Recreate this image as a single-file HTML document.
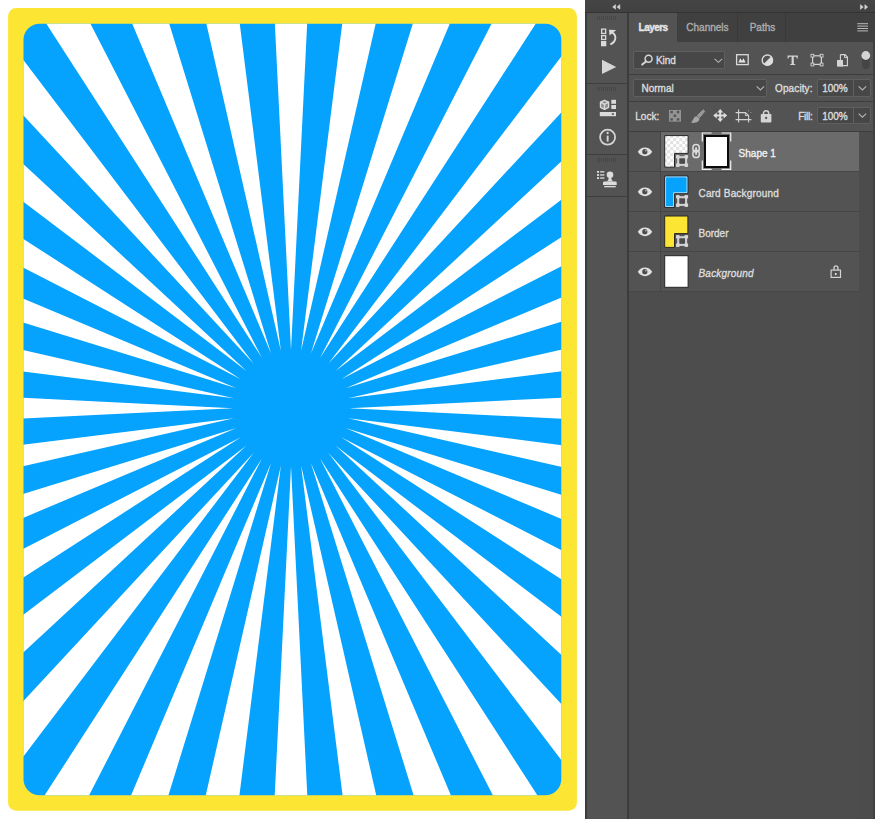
<!DOCTYPE html>
<html><head><meta charset="utf-8"><title>Layers</title>
<style>
html,body{margin:0;padding:0;}
body{width:875px;height:819px;position:relative;overflow:hidden;background:#fff;font-family:"Liberation Sans",sans-serif;font-size:10px;color:#dcdcdc;}
.abs{position:absolute;}
#card{position:absolute;left:0;top:0;}
#ui{position:absolute;left:585px;top:0;width:290px;height:819px;background:#4d4d4d;overflow:hidden;}
.t{position:absolute;white-space:nowrap;line-height:14px;height:14px;-webkit-text-stroke:0.35px currentColor;}
.hl{position:absolute;height:1px;background:#3e3e3e;}
.grip{position:absolute;width:20px;height:4px;background:repeating-linear-gradient(90deg,#474747 0,#474747 1px,#535353 1px,#535353 2px);}
.field{position:absolute;background:#474747;border:1px solid #5f5f5f;box-sizing:border-box;border-radius:2px;}
.row{position:absolute;left:44px;width:230px;height:39px;background:#535353;}
.row .eyecol{position:absolute;left:0;top:0;width:31px;height:39px;border-right:1px solid #464646;}
.thumb{position:absolute;left:79.2px;width:24.4px;height:32.5px;box-sizing:border-box;overflow:hidden;}
.chk{position:absolute;left:0;top:0;width:24px;height:32px;background:conic-gradient(#d9d9d9 25%,#fff 0 50%,#d9d9d9 0 75%,#fff 0) 0 0/8px 8px;opacity:.8}
.cut{position:absolute;width:16px;height:16px;background:#535353;border-left:1px solid #2a2a2a;border-top:1px solid #2a2a2a;}
</style></head><body>
<svg id="card" width="585" height="819" viewBox="0 0 585 819">
<defs><clipPath id="cc"><rect x="23.5" y="23.7" width="537.8" height="771.5" rx="16" ry="16"/></clipPath></defs>
<rect x="8.1" y="8.1" width="568.8" height="802.6" rx="8" ry="8" fill="#fde534"/>
<g clip-path="url(#cc)"><rect x="20" y="20" width="545" height="780" fill="#05a3fe"/><path d="M349.00 408.20L991.00 439.98L991.00 376.42ZM348.12 418.27L974.85 561.05L985.88 498.46ZM345.50 428.04L937.92 677.48L959.65 617.75ZM341.23 437.20L881.33 785.72L913.11 730.68ZM335.43 445.48L806.80 882.50L847.66 833.81ZM328.28 452.63L716.61 964.86L765.30 924.00ZM320.00 458.43L613.48 1030.31L668.52 998.53ZM310.84 462.70L500.55 1076.85L560.28 1055.12ZM301.07 465.32L381.26 1103.08L443.85 1092.05ZM291.00 466.20L259.22 1108.20L322.78 1108.20ZM280.93 465.32L138.15 1092.05L200.74 1103.08ZM271.16 462.70L21.72 1055.12L81.45 1076.85ZM262.00 458.43L-86.52 998.53L-31.48 1030.31ZM253.72 452.63L-183.30 924.00L-134.61 964.86ZM246.57 445.48L-265.66 833.81L-224.80 882.50ZM240.77 437.20L-331.11 730.68L-299.33 785.72ZM236.50 428.04L-377.65 617.75L-355.92 677.48ZM233.88 418.27L-403.88 498.46L-392.85 561.05ZM233.00 408.20L-409.00 376.42L-409.00 439.98ZM233.88 398.13L-392.85 255.35L-403.88 317.94ZM236.50 388.36L-355.92 138.92L-377.65 198.65ZM240.77 379.20L-299.33 30.68L-331.11 85.72ZM246.57 370.92L-224.80 -66.10L-265.66 -17.41ZM253.72 363.77L-134.61 -148.46L-183.30 -107.60ZM262.00 357.97L-31.48 -213.91L-86.52 -182.13ZM271.16 353.70L81.45 -260.45L21.72 -238.72ZM280.93 351.08L200.74 -286.68L138.15 -275.65ZM291.00 350.20L322.78 -291.80L259.22 -291.80ZM301.07 351.08L443.85 -275.65L381.26 -286.68ZM310.84 353.70L560.28 -238.72L500.55 -260.45ZM320.00 357.97L668.52 -182.13L613.48 -213.91ZM328.28 363.77L765.30 -107.60L716.61 -148.46ZM335.43 370.92L847.66 -17.41L806.80 -66.10ZM341.23 379.20L913.11 85.72L881.33 30.68ZM345.50 388.36L959.65 198.65L937.92 138.92ZM348.12 398.13L985.88 317.94L974.85 255.35Z" fill="#fff"/></g>
</svg>
<div class="abs" style="left:584.5px;top:0;width:2.5px;height:819px;background:#3c3c3c"></div>
<div id="ui">
<!-- all coordinates inside #ui are page-x minus 585 -->
<div class="abs" style="left:0;top:0;width:2px;height:819px;background:#3c3c3c"></div>
<!-- top bar -->
<div class="abs" style="left:0;top:0;width:290px;height:12px;background:linear-gradient(#454545,#414141)"></div>
<div class="abs" style="left:0;top:12px;width:290px;height:1px;background:#343434"></div>
<!-- icon strip -->
<div class="abs" style="left:2px;top:13px;width:40px;height:806px;background:#535353"></div>
<div class="abs" style="left:42px;top:13px;width:2px;height:806px;background:#3c3c3c"></div>
<div class="hl" style="left:1px;top:83px;width:41px"></div>
<div class="hl" style="left:1px;top:154px;width:41px"></div>
<div class="hl" style="left:1px;top:196px;width:41px"></div>
<div class="grip" style="left:12px;top:16px"></div>
<div class="grip" style="left:12px;top:87px"></div>
<div class="grip" style="left:12px;top:158px"></div>
<!-- layers panel -->
<div class="abs" style="left:44px;top:13px;width:245px;height:29px;background:#404040"></div>
<div class="abs" style="left:44px;top:13px;width:48px;height:29px;background:#535353"></div>
<div class="abs" style="left:44px;top:42px;width:245px;height:90px;background:#535353"></div>
<div class="abs" style="left:152px;top:14px;width:1px;height:28px;background:#393939"></div>
<div class="abs" style="left:200px;top:14px;width:1px;height:28px;background:#393939"></div>
<div class="hl" style="left:44px;top:74px;width:245px"></div>
<div class="hl" style="left:44px;top:101px;width:245px"></div>
<div class="hl" style="left:44px;top:131px;width:245px"></div>
<div class="abs" style="left:274px;top:132px;width:15px;height:687px;background:#4c4c4c"></div>
<div class="abs" style="left:288px;top:13px;width:2px;height:806px;background:#404040"></div>
<!-- tabs text -->
<div class="t" style="left:53.6px;top:21px;font-weight:bold;letter-spacing:-0.55px;color:#e6e6e6">Layers</div>
<div class="t" style="left:101.3px;top:21px;color:#adadad">Channels</div>
<div class="t" style="left:164.7px;top:21px;color:#adadad">Paths</div>
<!-- kind dropdown -->
<div class="field" style="left:48px;top:51.2px;width:92px;height:18.2px"></div>
<div class="t" style="left:70.9px;top:53.5px">Kind</div>
<!-- normal dropdown -->
<div class="field" style="left:48px;top:78.7px;width:134px;height:18px"></div>
<div class="t" style="left:56.5px;top:82px">Normal</div>
<div class="t" style="left:190px;top:82px;letter-spacing:0.12px">Opacity:</div>
<div class="field" style="left:232px;top:78.7px;width:37px;height:18px;border-radius:2px 0 0 2px"></div>
<div class="field" style="left:268px;top:78.7px;width:18px;height:18px;border-radius:0 2px 2px 0"></div>
<div class="t" style="left:237.2px;top:82px">100%</div>
<!-- lock row -->
<div class="t" style="left:50.3px;top:110px">Lock:</div>
<div class="t" style="left:213.2px;top:110px;letter-spacing:-0.25px">Fill:</div>
<div class="field" style="left:232px;top:106.6px;width:37px;height:17.8px;border-radius:2px 0 0 2px"></div>
<div class="field" style="left:268px;top:106.6px;width:18px;height:17.8px;border-radius:0 2px 2px 0"></div>
<div class="t" style="left:237.2px;top:110px">100%</div>
<!-- rows -->
<div class="row" style="top:132px;background:#6b6b6b"><div class="eyecol" style="background:#535353"></div></div>
<div class="row" style="top:172px"><div class="eyecol"></div></div>
<div class="row" style="top:212px"><div class="eyecol"></div></div>
<div class="row" style="top:252px"><div class="eyecol"></div></div>
<div class="hl" style="left:44px;top:171px;width:230px;background:#464646"></div>
<div class="hl" style="left:44px;top:211px;width:230px;background:#464646"></div>
<div class="hl" style="left:44px;top:251px;width:230px;background:#464646"></div>
<div class="hl" style="left:44px;top:291px;width:230px;background:#464646"></div>
<div class="t" style="left:153.6px;top:146.5px;color:#f0f0f0">Shape 1</div>
<div class="t" style="left:113.5px;top:186.5px;letter-spacing:0.17px">Card Background</div>
<div class="t" style="left:113.5px;top:226.5px">Border</div>
<div class="t" style="left:113.5px;top:266.5px;font-style:italic;letter-spacing:0.2px">Background</div>
<!-- mask -->
<div class="abs" style="left:118.8px;top:134.5px;width:25.2px;height:33.4px;background:#0a0a0a"></div>
<div class="abs" style="left:121px;top:136.9px;width:21.3px;height:28.9px;background:#fff"></div>
<svg class="abs" style="left:0;top:0" width="290" height="819" viewBox="585 0 290 819" fill="none">
<!-- collapse arrows -->
<path d="M612.600 6.900L615.600 4.600V9.200ZM616.900 6.900L619.900 4.600V9.200Z" fill="#d4d4d4" stroke="#d4d4d4" stroke-width="0.500"/>
<path d="M860.400 4.600L863.300 7L860.400 9.400Z M864.800 4.600L867.700 7L864.800 9.400Z" fill="#d4d4d4" stroke="#d4d4d4" stroke-width="0.500"/>
<!-- panel menu -->
<path d="M857.3 23.7H868M857.3 26.1H868M857.3 28.5H868M857.3 30.9H868" stroke="#b8b8b8" stroke-width="1"/>
<!-- history icon -->
<g stroke="#dadada" stroke-width="1.300">
<rect x="601.650" y="29.150" width="4" height="4.300"/>
<rect x="601.650" y="35.650" width="4" height="3.800"/>
<rect x="601.650" y="41.650" width="4" height="4" fill="#dadada"/>
</g>
<path d="M612 32.300C616.200 34.600 617.400 40.800 610.300 44.500" stroke="#dadada" stroke-width="1.900" fill="none"/>
<path d="M609 29.800L616.200 30.100L609.500 35.400Z" fill="#dadada"/>
<!-- play -->
<path d="M602 59.8L616.2 66.9L602 74Z" fill="#d6d6d6"/>
<!-- properties icon -->
<g stroke="#dadada" stroke-width="1.400" stroke-linejoin="round" fill="#8c8c8c">
<path d="M604.500 100.300L608.600 102.200V107.300L604.500 109.400L600.500 107.300V102.200Z"/>
<path d="M600.500 102.200L604.500 104.300L608.600 102.200M604.500 104.300V109.400" fill="none"/>
</g>
<rect x="611.300" y="99.800" width="4.700" height="4" fill="#dadada"/>
<rect x="611.300" y="105" width="4.700" height="4" fill="#dadada"/>
<rect x="599.800" y="112" width="16.200" height="4.200" fill="#dadada"/>
<rect x="611.800" y="113.100" width="2.100" height="1.900" fill="#666"/>
<!-- info -->
<circle cx="607.6" cy="137.2" r="7.5" stroke="#d4d4d4" stroke-width="1.8"/>
<rect x="606.7" y="135.6" width="1.9" height="6" fill="#d4d4d4"/>
<circle cx="607.65" cy="133" r="1.15" fill="#d4d4d4"/>
<!-- clone source -->
<g fill="#dcdcdc">
<rect x="597" y="171" width="2.100" height="1.800"/><rect x="600.100" y="171.200" width="4.300" height="1.300"/>
<rect x="597" y="174.100" width="2.100" height="1.800"/><rect x="600.100" y="174.300" width="4.300" height="1.300"/>
<rect x="597" y="177.200" width="2.100" height="1.800"/><rect x="600.100" y="177.400" width="4.300" height="1.300"/>
<circle cx="610" cy="174.800" r="3.300"/>
<path d="M608.700 177.200H611.300C611.300 179.600 611.800 181 614 181.600H606C608.200 181 608.700 179.600 608.700 177.200Z"/>
<path d="M604.200 181.400H615.500Q616.700 181.400 616.700 182.600V184.900H603V182.600Q603 181.400 604.200 181.400Z"/>
<rect x="604.200" y="185.900" width="11.500" height="1.400"/>
</g>
<!-- search icon -->
<circle cx="648.6" cy="58.700" r="3.500" stroke="#d6d6d6" stroke-width="1.500"/>
<path d="M646 61.400L642.200 64.600" stroke="#d6d6d6" stroke-width="2" stroke-linecap="round"/>
<!-- chevrons -->
<g stroke="#b4b4b4" stroke-width="1.15" fill="none">
<path d="M714.600 58.800L718.400 62.300L722.200 58.800"/>
<path d="M756.600 86.400L760.400 89.900L764.200 86.400"/>
<path d="M858.600 86.400L862.400 89.900L866.200 86.400"/>
<path d="M858.600 113.600L862.400 117.100L866.200 113.600"/>
</g>
<!-- filter: pixel -->
<rect x="736.600" y="54.700" width="11.600" height="9.900" stroke="#dadada" stroke-width="1.300"/>
<path d="M738.400 62.500L740.300 58.200L742 61L743.500 58.200L745.600 62.500Z" fill="#e4e4e4"/>
<!-- filter: adjustment -->
<circle cx="767.400" cy="60.200" r="5.200" stroke="#dadada" stroke-width="1.400"/>
<path d="M771.100 56.500A5.200 5.200 0 0 1 763.700 63.900Z" fill="#dedede"/>
<!-- filter: type -->
<path d="M787.6 55.4H797.8V58.4H796.8C796.6 57.2 796.2 56.8 795 56.8H793.8V63.2C793.8 63.9 794.2 64.1 795.2 64.1V65H790.2V64.1C791.2 64.1 791.6 63.9 791.6 63.2V56.8H790.4C789.2 56.8 788.8 57.2 788.6 58.4H787.6Z" fill="#d4d4d4"/>
<!-- filter: shape -->
<g stroke="#d4d4d4" stroke-width="1.2">
<rect x="812.6" y="55.8" width="8.8" height="8.6"/>
</g>
<g fill="#535353" stroke="#d4d4d4" stroke-width="0.9">
<rect x="811" y="54.3" width="2.8" height="2.8"/><rect x="820.2" y="54.3" width="2.8" height="2.8"/>
<rect x="811" y="63.1" width="2.8" height="2.8"/><rect x="820.2" y="63.1" width="2.8" height="2.8"/>
</g>
<!-- filter: smart object -->
<path d="M840.4 54.6H845L847.4 57V65.6H841" stroke="#d4d4d4" stroke-width="1.1"/>
<path d="M844.6 54.6V57.6H847.4" stroke="#d4d4d4" stroke-width="1"/>
<rect x="837" y="60" width="6" height="6.6" fill="#d4d4d4"/>
<path d="M840.4 54.6V60" stroke="#d4d4d4" stroke-width="1.1"/>
<!-- filter toggle -->
<rect x="862.300" y="52" width="7.400" height="17" rx="3.700" fill="#454545"/>
<circle cx="865.800" cy="55.500" r="4.400" fill="#d4d4d4"/>
<!-- lock: transparency -->
<rect x="669" y="110" width="12" height="11.600" fill="#949494"/>
<g fill="#555">
<rect x="670.400" y="110.900" width="2.500" height="2.400"/><rect x="676.800" y="110.900" width="2.500" height="2.400"/>
<rect x="673.600" y="114.500" width="2.500" height="2.500"/>
<rect x="670.400" y="118.200" width="2.500" height="2.400"/><rect x="676.800" y="118.200" width="2.500" height="2.400"/>
</g>
<!-- lock: brush -->
<path d="M703.200 109.800L704.800 111.300L699.400 117.700L697.200 115.600Z" fill="#989898" stroke="#989898" stroke-width="1" stroke-linejoin="round"/>
<path d="M696.800 116.200C693.400 116.200 693.800 119.800 691 122.600C695 123.600 699.800 122 699.400 118.600Z" fill="#a6a6a6"/>
<!-- lock: move -->
<path d="M720.200 109L723.200 112.600H721.200V114.600H723.600V112.600L727.200 115.500L723.600 118.400V116.400H721.200V118.400H723.200L720.200 122L717.200 118.400H719.200V116.400H716.800V118.400L713.200 115.500L716.800 112.600V114.600H719.200V112.600H717.200Z" fill="#dedede"/>
<!-- lock: artboard -->
<g stroke="#d4d4d4" stroke-width="1.1">
<path d="M738.6 109.6V122.6M735.6 112.6H745.4L748.6 115.6V122.6M735.6 119.6H751.4"/>
<path d="M745.4 112.6V115.6H748.6" stroke-width="0.9"/>
<path d="M748 110.400L749 111.200M750.400 113L751.200 112.200" stroke-width="0.9" stroke-opacity="0.7"/>
</g>
<!-- lock: all -->
<path d="M763.5 114.4V113.400A2.6 2.6 0 0 1 768.700 113.400V114.400" stroke="#d4d4d4" stroke-width="1.5"/>
<rect x="760.8" y="113.9" width="10.6" height="8.6" rx="0.8" fill="#d4d4d4"/>
<circle cx="766.100" cy="118" r="1.150" fill="#535353"/>
<!-- eyes -->
<g>
<path d="M637.800 151.800C641 146 649 146 652.200 151.800C649 157.600 641 157.600 637.800 151.800Z" fill="#e0e0e0"/>
<circle cx="644.800" cy="151.700" r="2.600" fill="#4a4a4a"/>
<circle cx="645.800" cy="150.800" r="0.800" fill="#c8c8c8"/>
</g>
<g transform="translate(0,40)">
<path d="M637.800 151.800C641 146 649 146 652.200 151.800C649 157.600 641 157.600 637.800 151.800Z" fill="#e0e0e0"/>
<circle cx="644.800" cy="151.700" r="2.600" fill="#4a4a4a"/>
<circle cx="645.800" cy="150.800" r="0.800" fill="#c8c8c8"/>
</g><g transform="translate(0,80)">
<path d="M637.800 151.800C641 146 649 146 652.200 151.800C649 157.600 641 157.600 637.800 151.800Z" fill="#e0e0e0"/>
<circle cx="644.800" cy="151.700" r="2.600" fill="#4a4a4a"/>
<circle cx="645.800" cy="150.800" r="0.800" fill="#c8c8c8"/>
</g><g transform="translate(0,120)">
<path d="M637.800 151.800C641 146 649 146 652.200 151.800C649 157.600 641 157.600 637.800 151.800Z" fill="#e0e0e0"/>
<circle cx="644.800" cy="151.700" r="2.600" fill="#4a4a4a"/>
<circle cx="645.800" cy="150.800" r="0.800" fill="#c8c8c8"/>
</g>
<!-- thumbs -->
<defs><pattern id="chk" x="664.2" y="135.1" width="6" height="6" patternUnits="userSpaceOnUse"><rect width="6" height="6" fill="#fff"/><rect width="3" height="3" fill="#e2e2e2"/><rect x="3" y="3" width="3" height="3" fill="#e2e2e2"/></pattern></defs>
<path d="M664.700 135.600H688.100V153.400H674.500V167.200H664.700Z" fill="url(#chk)" stroke="#262626" stroke-width="1"/>
<path d="M664.700 176H687.900V193.600H674.500V207.400H664.700Z" fill="#05a3fe" stroke="#2a2420" stroke-width="1"/>
<path d="M665.600 176.900H687V192.700H673.600V206.500H665.600Z" stroke="#fff" stroke-opacity="0.8" stroke-width="0.800"/>
<path d="M664.700 216H687.900V233.600H674.500V247.400H664.700Z" fill="#fde534" stroke="#2a2820" stroke-width="1"/>
<rect x="664.7" y="255.700" width="23.400" height="31.600" fill="#fff" stroke="#262626" stroke-width="1"/>
<!-- vector badges -->
<g>
<rect x="678.200" y="157.200" width="7.900" height="7.700" fill="#4c4c4c" stroke="#d0d0d0" stroke-width="2.100"/>
<g fill="#d6d6d6">
<rect x="676" y="155" width="3.700" height="3.700" rx="1.100"/><rect x="684.400" y="155" width="3.700" height="3.700" rx="1.100"/>
<rect x="676" y="163.300" width="3.700" height="3.700" rx="1.100"/><rect x="684.400" y="163.300" width="3.700" height="3.700" rx="1.100"/>
</g>
</g>
<g transform="translate(0,40)">
<rect x="678.200" y="157.200" width="7.900" height="7.700" fill="#4c4c4c" stroke="#d0d0d0" stroke-width="2.100"/>
<g fill="#d6d6d6">
<rect x="676" y="155" width="3.700" height="3.700" rx="1.100"/><rect x="684.400" y="155" width="3.700" height="3.700" rx="1.100"/>
<rect x="676" y="163.300" width="3.700" height="3.700" rx="1.100"/><rect x="684.400" y="163.300" width="3.700" height="3.700" rx="1.100"/>
</g>
</g><g transform="translate(0,80)">
<rect x="678.200" y="157.200" width="7.900" height="7.700" fill="#4c4c4c" stroke="#d0d0d0" stroke-width="2.100"/>
<g fill="#d6d6d6">
<rect x="676" y="155" width="3.700" height="3.700" rx="1.100"/><rect x="684.400" y="155" width="3.700" height="3.700" rx="1.100"/>
<rect x="676" y="163.300" width="3.700" height="3.700" rx="1.100"/><rect x="684.400" y="163.300" width="3.700" height="3.700" rx="1.100"/>
</g>
</g>
<!-- link -->
<g stroke="#dadada" stroke-width="1.5">
<rect x="692.9" y="144.6" width="6.4" height="7.4" rx="3.2"/>
<rect x="692.9" y="150.2" width="6.4" height="7.4" rx="3.2"/>
</g>
<path d="M696.1 148V154" stroke="#dadada" stroke-width="1.8" stroke-linecap="round"/>
<!-- mask selection brackets -->
<path d="M702.3 141.6V133H711.6M721.6 133H730.7V141.600M730.7 160.4V169.4H721.600M711.6 169.4H702.3V160.400" stroke="#f2f2f2" stroke-width="1.2"/>
<!-- row4 lock -->
<path d="M834 270V267.800A1.950 1.950 0 0 1 837.900 267.800V270" stroke="#d4d4d4" stroke-width="1.300"/>
<rect x="831.100" y="270.100" width="9.400" height="7.300" stroke="#d4d4d4" stroke-width="1.200"/>
<circle cx="835.800" cy="274.100" r="1.050" fill="#e8e8e8"/>
</svg>


</div>
</body></html>
